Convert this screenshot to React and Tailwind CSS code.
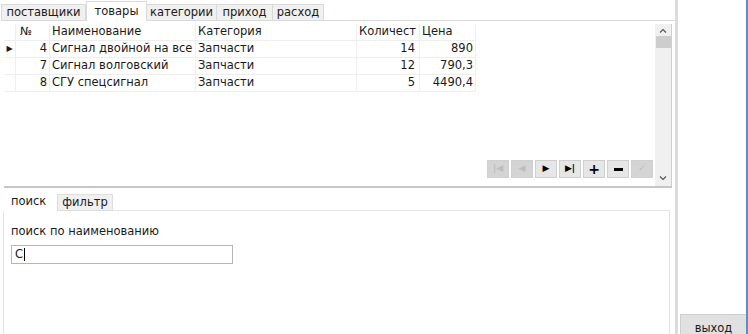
import React from 'react';

const font = { fontFamily: '"DejaVu Sans", Verdana, sans-serif' };

const topTabs = ['поставщики', 'товары', 'категории', 'приход', 'расход'];
const tabWidths = ['w-[85px]', 'w-[61px]', 'w-[71px]', 'w-[57px]', 'w-[52px]'];

const rows = [
  { id: 4, name: 'Сигнал двойной на все', cat: 'Запчасти', qty: 14, price: '890' },
  { id: 7, name: 'Сигнал волговский', cat: 'Запчасти', qty: 12, price: '790,3' },
  { id: 8, name: 'СГУ спецсигнал', cat: 'Запчасти', qty: 5, price: '4490,4' },
];

const NavButton = ({ disabled, children }) => (
  <div
    className={`w-[22px] h-[18px] flex items-center justify-center border border-[#cfcfcf] ${
      disabled ? 'bg-[#d4d4d4] text-[#bdbdbd]' : 'bg-[#e6e6e6] text-black'
    }`}
  >
    {children}
  </div>
);

const App = () => {
  return (
    <div className="w-[748px] h-[334px] flex bg-white overflow-hidden text-[11.5px] text-[#1a1a1a]" style={font}>
      {/* left column */}
      <div className="w-[678px] h-full flex flex-col border-r-[3px] border-[#dcdcdc]">
        {/* top tabs */}
        <div className="h-[21px] flex items-end pl-[2px]">
          {topTabs.map((t, i) => (
            <div
              key={t}
              className={`${tabWidths[i]} flex items-center justify-center border border-[#d9d9d9] whitespace-nowrap ${
                i === 1 ? 'h-[20px] bg-white border-b-0' : 'h-[17px] bg-[#f0f0f0] -ml-px'
              }`}
            >
              {t}
            </div>
          ))}
          <div className="flex-1 border-b border-[#d9d9d9] h-px" />
        </div>

        {/* grid area */}
        <div className="h-[167px] flex pl-[4px] pt-[3px] pr-[3px]">
          <div className="flex-1 flex border-b-2 border-[#c6c6c6]">
            <div className="flex-1 flex flex-col relative">
              <div className="flex h-[17px] items-center">
                <div className="w-[12px] h-full border-r border-b border-[#eeeeee]" />
                <div className="w-[34px] h-full pl-[4px] flex items-center border-r border-b border-[#eeeeee]">№</div>
                <div className="w-[146px] h-full pl-[2px] flex items-center border-r border-b border-[#eeeeee]">Наименование</div>
                <div className="w-[161px] h-full pl-[2px] flex items-center border-r border-b border-[#eeeeee]">Категория</div>
                <div className="w-[63px] h-full pl-[2px] flex items-center border-r border-b border-[#eeeeee] overflow-hidden whitespace-nowrap">Количест</div>
                <div className="w-[56px] h-full pl-[2px] flex items-center border-r border-b border-[#eeeeee]">Цена</div>
              </div>
              {rows.map((r, i) => (
                <div key={r.id} className="flex h-[17px] items-center">
                  <div className="w-[12px] h-full border-r border-b border-[#eeeeee] flex items-center justify-center text-[8px]">
                    {i === 0 ? '▶' : ''}
                  </div>
                  <div className="w-[34px] h-full pr-[2px] flex items-center justify-end border-r border-b border-[#eeeeee]">{r.id}</div>
                  <div className="w-[146px] h-full pl-[2px] flex items-center border-r border-b border-[#eeeeee] overflow-hidden whitespace-nowrap">{r.name}</div>
                  <div className="w-[161px] h-full pl-[2px] flex items-center border-r border-b border-[#eeeeee]">{r.cat}</div>
                  <div className="w-[63px] h-full pr-[4px] flex items-center justify-end border-r border-b border-[#eeeeee]">{r.qty}</div>
                  <div className="w-[56px] h-full pr-[2px] flex items-center justify-end border-r border-b border-[#eeeeee]">{r.price}</div>
                </div>
              ))}
              <div className="flex-1" />
              {/* navigator */}
              <div className="absolute right-[2px] top-[136px] flex gap-[2px] text-[9px] font-bold">
                <NavButton disabled>|◀</NavButton>
                <NavButton disabled>◀</NavButton>
                <NavButton>▶</NavButton>
                <NavButton>▶|</NavButton>
                <NavButton>
                  <span className="text-[14px] leading-none">+</span>
                </NavButton>
                <NavButton>
                  <span className="w-[9px] h-[3px] bg-black block" />
                </NavButton>
                <NavButton disabled>✓</NavButton>
              </div>
            </div>
            {/* scrollbar */}
            <div className="w-[17px] flex flex-col bg-[#f0f0f0] border-r border-[#cfcfcf] items-center">
              <div className="h-[12px] flex items-center justify-center">
                <svg width="8" height="5" viewBox="0 0 8 5"><path d="M1 4.5 L4 1.5 L7 4.5" fill="none" stroke="#555" strokeWidth="1.2" /></svg>
              </div>
              <div className="w-[15px] h-[12px] bg-[#cdcdcd]" />
              <div className="flex-1" />
              <div className="h-[16px] flex items-center justify-center">
                <svg width="8" height="5" viewBox="0 0 8 5"><path d="M1 0.5 L4 3.5 L7 0.5" fill="none" stroke="#555" strokeWidth="1.2" /></svg>
              </div>
            </div>
          </div>
        </div>

        {/* bottom tabs */}
        <div className="h-[23px] flex items-end pl-[4px] pt-[5px]">
          <div className="w-[53px] h-[18px] flex items-center pl-[7px] bg-white">поиск</div>
          <div className="w-[56px] h-[17px] flex items-center justify-center bg-[#f0f0f0] border border-[#dedede]">фильтр</div>
          <div className="w-[557px] border-b border-[#e3e3e3] h-px" />
        </div>
        <div className="flex-1 ml-[3px] mr-[5px] border-l border-r border-[#e3e3e3] pl-[7px] pt-[14px] flex flex-col">
          <div className="h-[14px] flex items-center">поиск по наименованию</div>
          <div className="mt-[6px] w-[222px] h-[19px] border border-[#b5b5b5] flex items-center pl-[3px]">
            С<span className="w-px h-[13px] bg-black ml-[1px]" />
          </div>
        </div>
      </div>

      {/* right column */}
      <div className="flex-1 flex flex-col pl-[2px]">
        <div className="flex-1" />
        <div className="h-[20px] w-[66px] bg-[#e1e1e1] border-l border-t border-[#cfcfcf] flex justify-center pt-[5px]">
          выход
        </div>
      </div>
      <div className="w-[2px] bg-[#5b8fc9]" />
    </div>
  );
};

export default App;
